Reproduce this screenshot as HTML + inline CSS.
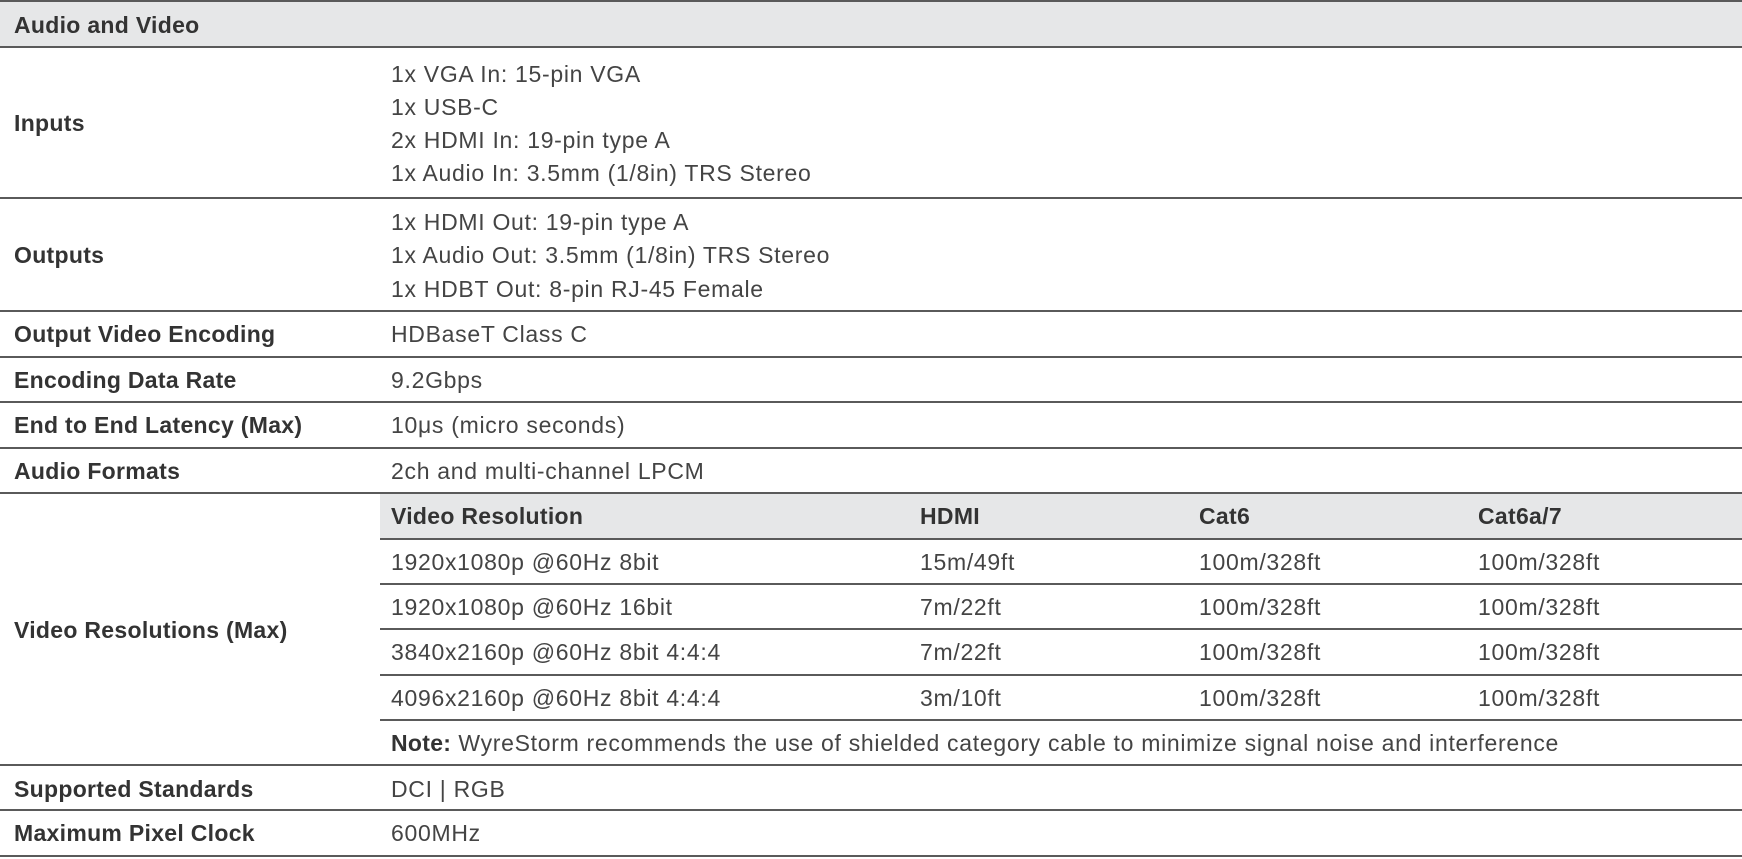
<!DOCTYPE html>
<html><head><meta charset="utf-8">
<style>
*{margin:0;padding:0;box-sizing:border-box}
body{width:1742px;height:859px;background:#fff;position:relative;overflow:hidden;font-family:"Liberation Sans",sans-serif;color:#3a3a3a}
.b{position:absolute;background:#e6e7e8}
.l{position:absolute;height:2px;background:#5a5a5a;right:0}
.t{position:absolute;font-size:23px;line-height:26px;white-space:nowrap;transform:translateY(-50%);letter-spacing:0.7px}
.k{font-weight:bold;color:#333;left:14px;letter-spacing:0.3px}
.v{color:#444}
b{letter-spacing:0.3px}
</style></head><body>
<div class="b" style="left:0;top:1px;width:1742px;height:46px"></div>
<div class="b" style="left:380px;top:493px;width:1362px;height:46px"></div>
<div class="l" style="left:0;top:0"></div>
<div class="l" style="left:0;top:46px"></div>
<div class="l" style="left:0;top:197px"></div>
<div class="l" style="left:0;top:310px"></div>
<div class="l" style="left:0;top:356px"></div>
<div class="l" style="left:0;top:401px"></div>
<div class="l" style="left:0;top:447px"></div>
<div class="l" style="left:0;top:492px"></div>
<div class="l" style="left:380px;top:538px"></div>
<div class="l" style="left:380px;top:583px"></div>
<div class="l" style="left:380px;top:628px"></div>
<div class="l" style="left:380px;top:674px"></div>
<div class="l" style="left:380px;top:719px"></div>
<div class="l" style="left:0;top:764px"></div>
<div class="l" style="left:0;top:809px"></div>
<div class="l" style="left:0;top:855px"></div>

<div class="t k" style="top:25px">Audio and Video</div>
<div class="t k" style="top:123px">Inputs</div>
<div class="t v" style="left:391px;top:74px">1x VGA In: 15-pin VGA</div>
<div class="t v" style="left:391px;top:107px">1x USB-C</div>
<div class="t v" style="left:391px;top:140px">2x HDMI In: 19-pin type A</div>
<div class="t v" style="left:391px;top:173px">1x Audio In: 3.5mm (1/8in) TRS Stereo</div>
<div class="t k" style="top:255px">Outputs</div>
<div class="t v" style="left:391px;top:222px">1x HDMI Out: 19-pin type A</div>
<div class="t v" style="left:391px;top:255px">1x Audio Out: 3.5mm (1/8in) TRS Stereo</div>
<div class="t v" style="left:391px;top:289px">1x HDBT Out: 8-pin RJ-45 Female</div>
<div class="t k" style="top:334px">Output Video Encoding</div>
<div class="t v" style="left:391px;top:334px">HDBaseT Class C</div>
<div class="t k" style="top:380px">Encoding Data Rate</div>
<div class="t v" style="left:391px;top:380px">9.2Gbps</div>
<div class="t k" style="top:425px">End to End Latency (Max)</div>
<div class="t v" style="left:391px;top:425px">10μs (micro seconds)</div>
<div class="t k" style="top:471px">Audio Formats</div>
<div class="t v" style="left:391px;top:471px">2ch and multi-channel LPCM</div>
<div class="t k" style="top:630px">Video Resolutions (Max)</div>

<div class="t k" style="left:391px;top:516px">Video Resolution</div>
<div class="t k" style="left:920px;top:516px">HDMI</div>
<div class="t k" style="left:1199px;top:516px">Cat6</div>
<div class="t k" style="left:1478px;top:516px">Cat6a/7</div>

<div class="t v" style="left:391px;top:562px">1920x1080p @60Hz 8bit</div>
<div class="t v" style="left:920px;top:562px">15m/49ft</div>
<div class="t v" style="left:1199px;top:562px">100m/328ft</div>
<div class="t v" style="left:1478px;top:562px">100m/328ft</div>
<div class="t v" style="left:391px;top:607px">1920x1080p @60Hz 16bit</div>
<div class="t v" style="left:920px;top:607px">7m/22ft</div>
<div class="t v" style="left:1199px;top:607px">100m/328ft</div>
<div class="t v" style="left:1478px;top:607px">100m/328ft</div>
<div class="t v" style="left:391px;top:652px">3840x2160p @60Hz 8bit 4:4:4</div>
<div class="t v" style="left:920px;top:652px">7m/22ft</div>
<div class="t v" style="left:1199px;top:652px">100m/328ft</div>
<div class="t v" style="left:1478px;top:652px">100m/328ft</div>
<div class="t v" style="left:391px;top:698px">4096x2160p @60Hz 8bit 4:4:4</div>
<div class="t v" style="left:920px;top:698px">3m/10ft</div>
<div class="t v" style="left:1199px;top:698px">100m/328ft</div>
<div class="t v" style="left:1478px;top:698px">100m/328ft</div>
<div class="t v" style="left:391px;top:743px"><b style="color:#333">Note:</b> WyreStorm recommends the use of shielded category cable to minimize signal noise and interference</div>

<div class="t k" style="top:789px">Supported Standards</div>
<div class="t v" style="left:391px;top:789px">DCI | RGB</div>
<div class="t k" style="top:833px">Maximum Pixel Clock</div>
<div class="t v" style="left:391px;top:833px">600MHz</div>
</body></html>
